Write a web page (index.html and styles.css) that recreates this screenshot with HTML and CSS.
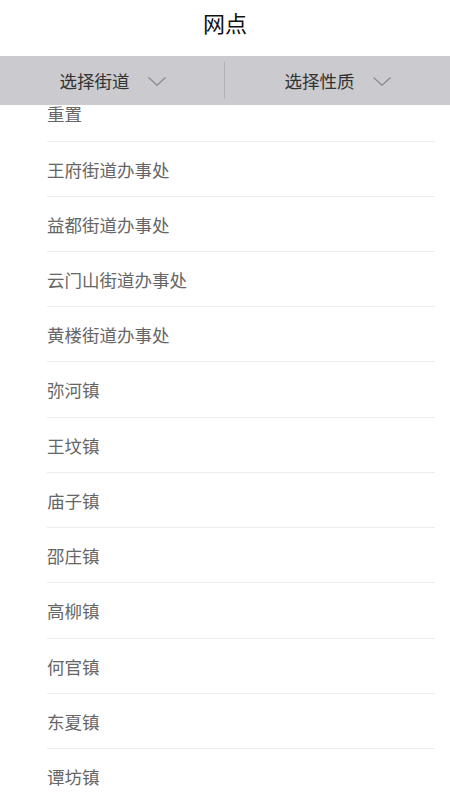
FILE: index.html
```html
<!DOCTYPE html>
<html lang="zh-CN">
<head>
    <meta charset="UTF-8">
    <meta name="viewport" content="width=device-width, initial-scale=1.0">
    <title>网点</title>
    <link rel="stylesheet" href="styles.css">
</head>
<body>
    <div class="header">网点</div>

    <div class="filter-bar">
        <div class="filter">
            <span>选择街道</span>
            <svg class="arrow" width="18" height="9" viewBox="0 0 18 9"><polyline points="0.5,0.5 9,8.3 17.5,0.5" fill="none" stroke="#8a8a8e" stroke-width="1.2"/></svg>
        </div>
        <div class="filter-divider"></div>
        <div class="filter">
            <span>选择性质</span>
            <svg class="arrow" width="18" height="9" viewBox="0 0 18 9"><polyline points="0.5,0.5 9,8.3 17.5,0.5" fill="none" stroke="#8a8a8e" stroke-width="1.2"/></svg>
        </div>
    </div>

    <ul class="street-list">
        <li>重置</li>
        <li>王府街道办事处</li>
        <li>益都街道办事处</li>
        <li>云门山街道办事处</li>
        <li>黄楼街道办事处</li>
        <li>弥河镇</li>
        <li>王坟镇</li>
        <li>庙子镇</li>
        <li>邵庄镇</li>
        <li>高柳镇</li>
        <li>何官镇</li>
        <li>东夏镇</li>
        <li>谭坊镇</li>
    </ul>
</body>
</html>
```

FILE: styles.css
```css
body {
    margin: 0;
    background-color: #fff;
    font-family: "Noto Sans CJK SC", "Noto Sans", sans-serif;
    overflow: hidden;
    height: 800px;
}

.header {
    height: 45px;
    line-height: 45px;
    margin-bottom: 11px;
    text-align: center;
    font-size: 22px;
    color: #111;
}

.filter-bar {
    position: relative;
    z-index: 2;
    display: flex;
    align-items: center;
    height: 49px;
    background-color: #cbcbcf;
}

.filter {
    flex: 1;
    display: flex;
    justify-content: center;
    align-items: center;
    gap: 18px;
    font-size: 17.5px;
    color: #333;
}

.filter .arrow {
    display: block;
    margin-top: 1px;
}

.filter-divider {
    width: 1px;
    height: 37px;
    margin-left: -1px;
    background-color: #b2b2b6;
}

.street-list {
    list-style: none;
    margin: -18.7px 15px 0 47px;
    padding: 0;
}

.street-list li {
    box-sizing: border-box;
    height: 55.23px;
    line-height: 56px;
    border-bottom: 1px solid #ececec;
    font-size: 17.5px;
    color: #666;
}
```
